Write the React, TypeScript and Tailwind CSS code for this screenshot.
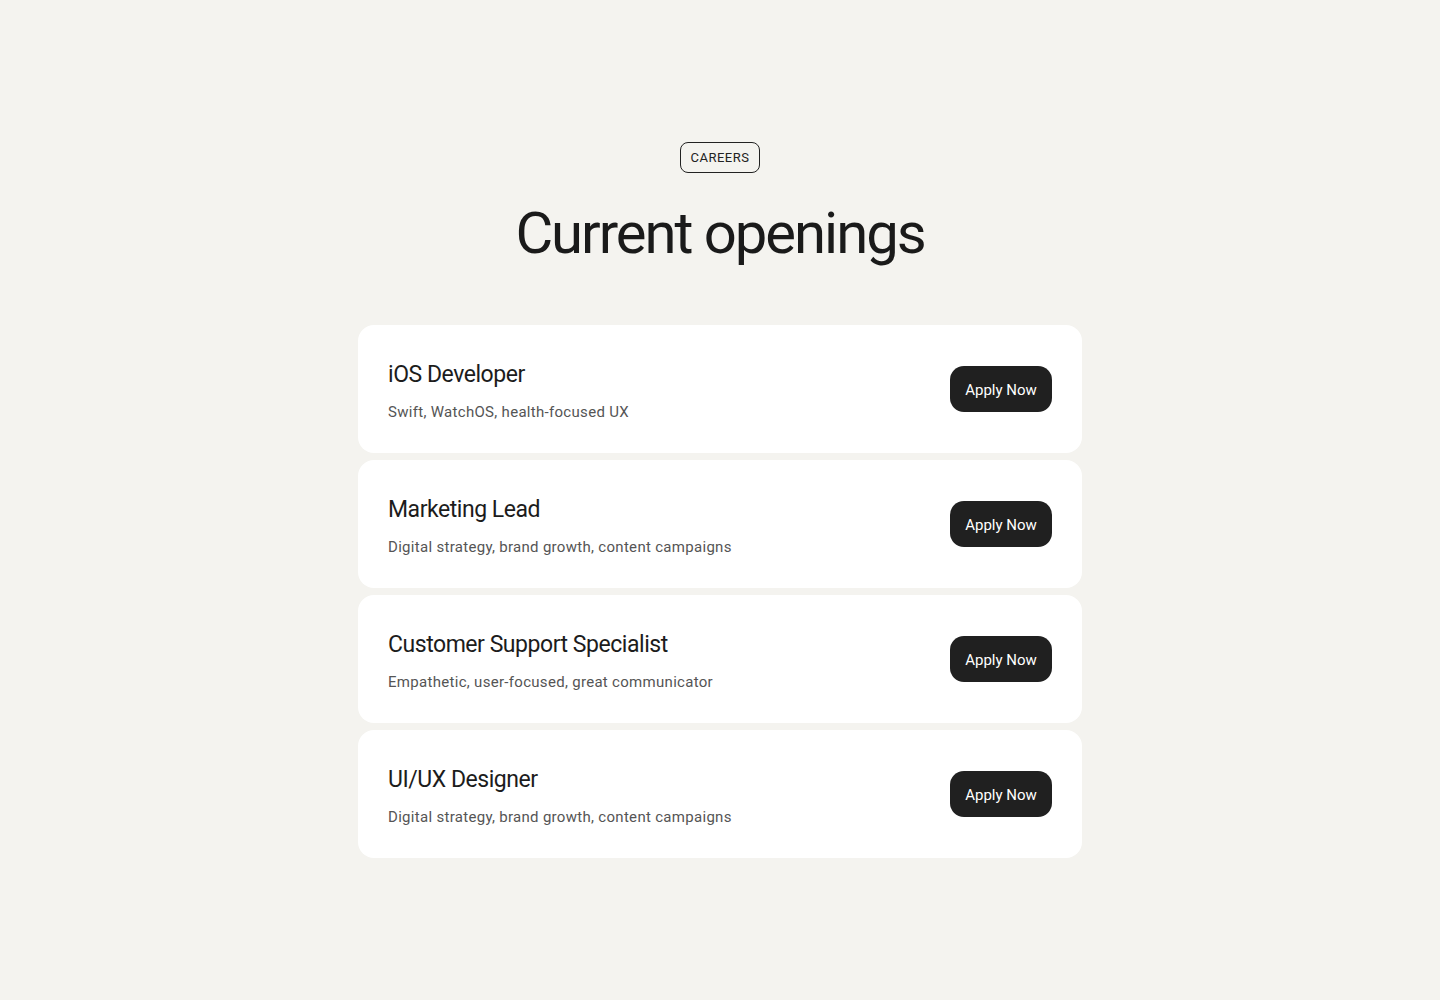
import React from "react";

const jobs = [
  { title: "iOS Developer", desc: "Swift, WatchOS, health-focused UX" },
  { title: "Marketing Lead", desc: "Digital strategy, brand growth, content campaigns" },
  { title: "Customer Support Specialist", desc: "Empathetic, user-focused, great communicator" },
  { title: "UI/UX Designer", desc: "Digital strategy, brand growth, content campaigns" },
];

export default function App() {
  return (
    <div
      className="min-h-[1000px] w-full bg-[#f4f3ef] text-[#1c1c1c]"
      style={{ fontFamily: "Roboto, 'Liberation Sans', sans-serif" }}
    >
      <div className="flex flex-col items-center pt-[142px]">
        <div className="flex h-[31px] w-[80px] items-center justify-center rounded-[8px] border-[1.5px] border-[#222] text-[13px] tracking-[0.04em] text-[#222]">
          CAREERS
        </div>
        <h1 className="mt-[25px] text-[58px] font-normal leading-[70px] tracking-[-0.035em] text-[#1a1a1a]">
          Current openings
        </h1>
        <div className="mt-[57px] flex w-[724px] flex-col gap-[7px]">
          {jobs.map((j) => (
            <div
              key={j.title}
              className="flex h-[128px] items-center justify-between rounded-[16px] bg-white px-[30px]"
            >
              <div className="flex flex-col pt-[4px]">
                <div className="text-[23px] leading-[28px] tracking-[-0.02em] text-[#1c1c1c]">
                  {j.title}
                </div>
                <div className="mt-[13px] text-[15px] leading-[20px] tracking-[0.02em] text-[#555]">
                  {j.desc}
                </div>
              </div>
              <button className="flex h-[46px] w-[102px] items-center justify-center rounded-[14px] bg-[#202020] pt-[2px] text-[15px] text-white">
                Apply Now
              </button>
            </div>
          ))}
        </div>
      </div>
    </div>
  );
}
